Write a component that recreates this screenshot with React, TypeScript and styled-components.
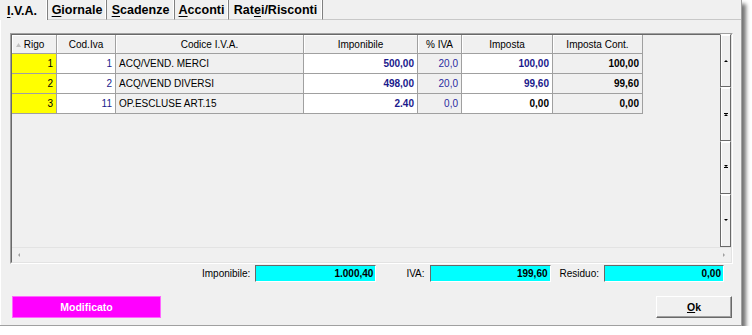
import styled, { createGlobalStyle } from "styled-components";

const GlobalStyle = createGlobalStyle`
  html, body {
    margin: 0;
    padding: 0;
    background: #ffffff;
  }
  body {
    font-family: "Liberation Sans", Arial, sans-serif;
    color: #000000;
  }
`;

type Align = "left" | "right" | "center";

interface Column {
  title: string;
  width: number;
}

interface CellStyle {
  bg: string;
  color: string;
  bold?: boolean;
  align: Align;
}

const columns: Column[] = [
  { title: "Rigo", width: 45 },
  { title: "Cod.Iva", width: 59 },
  { title: "Codice I.V.A.", width: 188 },
  { title: "Imponibile", width: 114 },
  { title: "% IVA", width: 44 },
  { title: "Imposta", width: 91 },
  { title: "Imposta Cont.", width: 90 },
];

const navy = "#1a1a8c";

const cellStyles: CellStyle[] = [
  { bg: "#ffff00", color: "#000000", align: "right" },
  { bg: "#ffffff", color: navy, align: "right" },
  { bg: "#f0f0f0", color: "#000000", align: "left" },
  { bg: "#ffffff", color: navy, bold: true, align: "right" },
  { bg: "#f0f0f0", color: "#2a2aa0", align: "right" },
  { bg: "#ffffff", color: navy, bold: true, align: "right" },
  { bg: "#f0f0f0", color: "#000000", bold: true, align: "right" },
];

const rows: string[][] = [
  ["1", "1", "ACQ/VEND. MERCI", "500,00", "20,0", "100,00", "100,00"],
  ["2", "2", "ACQ/VEND DIVERSI", "498,00", "20,0", "99,60", "99,60"],
  ["3", "11", "OP.ESCLUSE ART.15", "2.40", "0,0", "0,00", "0,00"],
];

const tabs = [
  { label: "I.V.A.", key: 0, width: 48, active: true },
  { label: "Giornale", key: 0, width: 59 },
  { label: "Scadenze", key: 0, width: 68 },
  { label: "Acconti", key: 0, width: 54 },
  { label: "Ratei/Risconti", key: 3, width: 94 },
];

function Mnemonic({ text, index }: { text: string; index: number }) {
  return (
    <>
      {text.slice(0, index)}
      <u>{text[index]}</u>
      {text.slice(index + 1)}
    </>
  );
}

function Arrow({ dir }: { dir: "up" | "down" | "upEnd" | "downEnd" | "left" | "right" }) {
  const glyphs: Record<string, string> = {
    up: "M1 4 L3 2 L5 4 Z",
    down: "M1 2 L3 4 L5 2 Z",
    upEnd: "M1 2 H5 V3 H1 Z M1 5 L3 3 L5 5 Z",
    downEnd: "M1 1 L3 3 L5 1 Z M1 3 H5 V4 H1 Z",
    left: "M4 1 L2 3 L4 5 Z",
    right: "M2 1 L4 3 L2 5 Z",
  };
  return (
    <svg width="6" height="6" viewBox="0 0 6 6">
      <path d={glyphs[dir]} fill={dir === "left" || dir === "right" ? "#a0a0a0" : "#000000"} />
    </svg>
  );
}

export default function App() {
  return (
    <>
      <GlobalStyle />
      <Window>
        <TabStrip>
          {tabs.map((t) => (
            <Tab key={t.label} $w={t.width} $active={!!t.active}>
              <Mnemonic text={t.label} index={t.key} />
            </Tab>
          ))}
          <TabFill />
        </TabStrip>
        <Page>
          <GridFrame>
            <GridInner>
              <GridTop>
                <DataArea>
                  <HeaderRow>
                    {columns.map((c, i) => (
                      <HeaderCell key={c.title} $w={c.width}>
                        {i === 0 && (
                          <SortMark>
                            <svg width="5" height="4" viewBox="0 0 5 4">
                              <path d="M0 4 L2.5 0 L5 4 Z" fill="#c0c0c0" />
                            </svg>
                          </SortMark>
                        )}
                        {c.title}
                      </HeaderCell>
                    ))}
                  </HeaderRow>
                  {rows.map((r) => (
                    <DataRow key={r[0]}>
                      {r.map((v, i) => {
                        const s = cellStyles[i];
                        const plainBlack = i === 5 && v === "0,00";
                        return (
                          <Cell
                            key={i}
                            $w={columns[i].width}
                            $bg={s.bg}
                            $color={plainBlack ? "#000000" : s.color}
                            $bold={!!s.bold}
                            $align={s.align}
                          >
                            {v}
                          </Cell>
                        );
                      })}
                    </DataRow>
                  ))}
                </DataArea>
                <ButtonStrip>
                  <StripButton>
                    <Arrow dir="up" />
                  </StripButton>
                  <StripButton>
                    <Arrow dir="upEnd" />
                  </StripButton>
                  <StripButton>
                    <Arrow dir="downEnd" />
                  </StripButton>
                  <StripButton>
                    <Arrow dir="down" />
                  </StripButton>
                </ButtonStrip>
              </GridTop>
              <HScroll>
                <Arrow dir="left" />
                <Arrow dir="right" />
              </HScroll>
            </GridInner>
          </GridFrame>

          <TotalsRow>
            <TotalLabel>Imponibile:</TotalLabel>
            <TotalBox $w={121}>1.000,40</TotalBox>
            <TotalLabel $gap={30}>IVA:</TotalLabel>
            <TotalBox $w={121}>199,60</TotalBox>
            <TotalLabel $gap={9}>Residuo:</TotalLabel>
            <TotalBox $w={120}>0,00</TotalBox>
          </TotalsRow>

          <Footer>
            <StatusBadge>Modificato</StatusBadge>
            <OkButton>
              <Mnemonic text="Ok" index={0} />
            </OkButton>
          </Footer>
        </Page>
      </Window>
    </>
  );
}

const Window = styled.div`
  width: 741px;
  height: 325px;
  background: #f0f0f0;
  border-right: 1px solid #a0a0a0;
  border-bottom: 1px solid #a0a0a0;
  box-shadow: 4px 4px 4px rgba(0, 0, 0, 0.55);
  display: flex;
  flex-direction: column;
  overflow: hidden;
`;

const TabStrip = styled.div`
  display: flex;
  height: 20px;
  flex-shrink: 0;
`;

const Tab = styled.div<{ $w: number; $active: boolean }>`
  width: ${(p) => p.$w}px;
  box-sizing: border-box;
  height: 20px;
  display: flex;
  align-items: center;
  justify-content: center;
  padding-top: 1px;
  font-size: 12.5px;
  font-weight: bold;
  color: #000000;
  border-right: 1px solid #808080;
  box-shadow: inset -1px 0 0 #ffffff;
  border-bottom: ${(p) => (p.$active ? "none" : "1px solid #d0d0d0")};
  ${(p) => (p.$active ? "padding-right: 3px;" : "")}

  & u {
    text-decoration-thickness: 1px;
    text-underline-offset: 2px;
  }
`;

const TabFill = styled.div`
  flex: 1;
  border-bottom: 1px solid #c8c8c8;
`;

const Page = styled.div`
  flex: 1;
  display: flex;
  flex-direction: column;
  border-left: 1px solid #ffffff;
`;

const GridFrame = styled.div`
  margin: 13px 0 0 9px;
  width: 721px;
  height: 229px;
  border: 1px solid;
  border-color: #a0a0a0 #ffffff #ffffff #a0a0a0;
`;

const GridInner = styled.div`
  height: 100%;
  box-sizing: border-box;
  border: 1px solid;
  border-color: #696969 #e3e3e3 #e3e3e3 #696969;
  display: flex;
  flex-direction: column;
  background: #f0f0f0;
`;

const GridTop = styled.div`
  flex: 1;
  display: flex;
  min-height: 0;
`;

const DataArea = styled.div`
  flex: 1;
  display: flex;
  flex-direction: column;
`;

const HeaderRow = styled.div`
  display: flex;
  height: 19px;
`;

const HeaderCell = styled.div<{ $w: number }>`
  position: relative;
  width: ${(p) => p.$w}px;
  box-sizing: border-box;
  display: flex;
  align-items: center;
  justify-content: center;
  font-size: 10px;
  color: #000000;
  background: #f0f0f0;
  border-right: 1px solid #a0a0a0;
  border-bottom: 1px solid #a0a0a0;
  box-shadow: inset 1px 1px 0 #ffffff;
`;

const SortMark = styled.span`
  position: absolute;
  left: 4px;
  top: 8px;
  display: flex;
`;

const DataRow = styled.div`
  display: flex;
  height: 20px;
`;

const Cell = styled.div<{
  $w: number;
  $bg: string;
  $color: string;
  $bold: boolean;
  $align: Align;
}>`
  width: ${(p) => p.$w}px;
  box-sizing: border-box;
  display: flex;
  align-items: center;
  justify-content: ${(p) =>
    p.$align === "right" ? "flex-end" : p.$align === "center" ? "center" : "flex-start"};
  padding: 0 3px;
  font-size: 10px;
  font-weight: ${(p) => (p.$bold ? "bold" : "normal")};
  color: ${(p) => p.$color};
  background: ${(p) => p.$bg};
  border-right: 1px solid #a0a0a0;
  border-bottom: 1px solid #a0a0a0;
  white-space: nowrap;
`;

const ButtonStrip = styled.div`
  width: 11px;
  display: flex;
  flex-direction: column;
  margin-top: -1px;
`;

const StripButton = styled.div`
  flex: 1;
  display: flex;
  align-items: center;
  justify-content: center;
  background: #f0f0f0;
  border: 1px solid;
  border-color: #ffffff #696969 #696969 #696969;
  box-shadow: inset 1px 1px 0 #ffffff;
`;

const HScroll = styled.div`
  height: 14px;
  display: flex;
  align-items: center;
  justify-content: space-between;
  padding: 0 4px 0 4px;
  border-top: 1px solid #e3e3e3;
  background: #f0f0f0;
`;

const TotalsRow = styled.div`
  display: flex;
  align-items: center;
  justify-content: flex-end;
  margin-top: 1px;
  padding-right: 17px;
  height: 17px;
`;

const TotalLabel = styled.span<{ $gap?: number }>`
  font-size: 10px;
  color: #000000;
  margin-left: ${(p) => p.$gap ?? 0}px;
  margin-right: 5px;
`;

const TotalBox = styled.div<{ $w: number }>`
  width: ${(p) => p.$w}px;
  height: 17px;
  box-sizing: border-box;
  background: #00ffff;
  border: 1px solid;
  border-color: #696969 #ffffff #ffffff #696969;
  display: flex;
  align-items: center;
  justify-content: flex-end;
  padding-right: 2px;
  font-size: 10px;
  font-weight: bold;
  color: #000000;
`;

const Footer = styled.div`
  display: flex;
  justify-content: space-between;
  align-items: center;
  margin-top: 14px;
  padding: 0 9px 0 11px;
`;

const StatusBadge = styled.div`
  width: 149px;
  height: 22px;
  box-sizing: border-box;
  background: #ff00ff;
  border: 1px solid #ff66ff;
  display: flex;
  align-items: center;
  justify-content: center;
  color: #ffffff;
  font-size: 10.5px;
  font-weight: bold;
`;

const OkButton = styled.div`
  width: 76px;
  height: 22px;
  box-sizing: border-box;
  background: #f0f0f0;
  border: 1px solid;
  border-color: #ffffff #696969 #696969 #ffffff;
  box-shadow: inset -1px -1px 0 #a0a0a0;
  display: flex;
  align-items: center;
  justify-content: center;
  font-size: 10.5px;
  font-weight: bold;
  color: #000000;

  & u {
    text-underline-offset: 1px;
  }
`;
